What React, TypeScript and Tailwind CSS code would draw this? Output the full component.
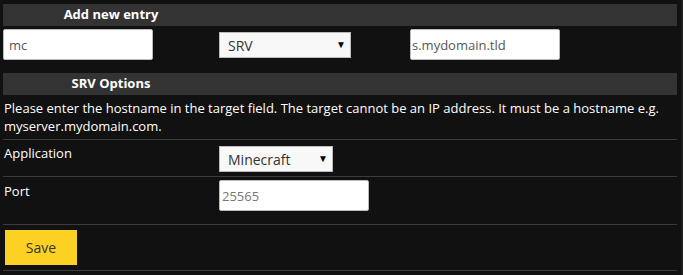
import React, { useState } from "react";

function Select({
  value,
  options,
  width,
  onChange,
}: {
  value: string;
  options: string[];
  width: string;
  onChange: (v: string) => void;
}) {
  return (
    <div className={`relative ${width}`}>
      <select
        value={value}
        onChange={(e) => onChange(e.target.value)}
        className="appearance-none w-full h-[26px] bg-[#f8f8f8] border border-[#bbb] text-[#333] text-[14px] pl-[8px] pr-[20px] outline-none"
      >
        {options.map((o) => (
          <option key={o}>{o}</option>
        ))}
      </select>
      <span className="pointer-events-none absolute right-[5px] top-[7px] text-[10px] leading-none text-black">
        ▼
      </span>
    </div>
  );
}

export default function App() {
  const [name, setName] = useState("mc");
  const [type, setType] = useState("SRV");
  const [target, setTarget] = useState("s.mydomain.tld");
  const [app, setApp] = useState("Minecraft");
  const [port, setPort] = useState("");

  const inputCls =
    "h-[31px] w-[150px] bg-white border border-[#bbb] rounded-[2px] text-[13px] text-[#555] outline-none";

  return (
    <div
      className="min-h-screen w-[683px] bg-[#111111] text-white border-r-[2px] border-[#1c1c1c]"
      style={{ fontFamily: '"Open Sans", "Noto Sans", sans-serif' }}
    >
      <div className="pl-[3px] pt-[4px] w-[677px]">
        {/* Add new entry */}
        <div className="grid grid-cols-[216px_191px_1fr] h-[22px] bg-[#333333] items-center">
          <div className="text-center font-bold text-[13px]">Add new entry</div>
        </div>
        <div className="grid grid-cols-[216px_191px_1fr] h-[47px] items-start pt-[3px]">
          <input
            value={name}
            onChange={(e) => setName(e.target.value)}
            className={`${inputCls} pl-[5px]`}
          />
          <div className="pt-[3px]">
            <Select
              value={type}
              options={["A", "AAAA", "CNAME", "MX", "SRV", "TXT"]}
              width="w-[132px]"
              onChange={setType}
            />
          </div>
          <input
            value={target}
            onChange={(e) => setTarget(e.target.value)}
            className={`${inputCls} pl-[1px]`}
          />
        </div>

        {/* SRV Options */}
        <div className="grid grid-cols-[216px_191px_1fr] h-[22px] bg-[#333333] items-center">
          <div className="text-center font-bold text-[13px]">SRV Options</div>
        </div>
        <p className="pl-[1px] pt-[4px] pb-[4px] text-[13px] leading-[18px] border-b border-[#3c3c3c]">
          Please enter the hostname in the target field. The target cannot be an
          IP address. It must be a hostname e.g. myserver.mydomain.com.
        </p>
        <div className="grid grid-cols-[216px_191px_1fr] h-[37px] items-start border-b border-[#3c3c3c]">
          <div className="pl-[1px] pt-[4px] text-[13px] leading-[18px]">Application</div>
          <div className="pt-[6px]">
            <Select
              value={app}
              options={["Minecraft", "Teamspeak", "Mumble", "Custom"]}
              width="w-[114px]"
              onChange={setApp}
            />
          </div>
        </div>
        <div className="grid grid-cols-[216px_191px_1fr] h-[48px] items-start border-b border-[#3c3c3c]">
          <div className="pl-[1px] pt-[5px] text-[13px] leading-[18px]">Port</div>
          <div className="pt-[3px]">
            <input
              value={port}
              placeholder="25565"
              onChange={(e) => setPort(e.target.value)}
              className={`${inputCls} pl-[2px] placeholder:text-[#777]`}
            />
          </div>
        </div>
        <div className="h-[46px] pt-[5px] pl-[2px] border-b border-[#3c3c3c]">
          <button className="w-[72px] h-[35px] bg-[#fdd123] text-[#333] text-[14px]">
            Save
          </button>
        </div>
      </div>
    </div>
  );
}
